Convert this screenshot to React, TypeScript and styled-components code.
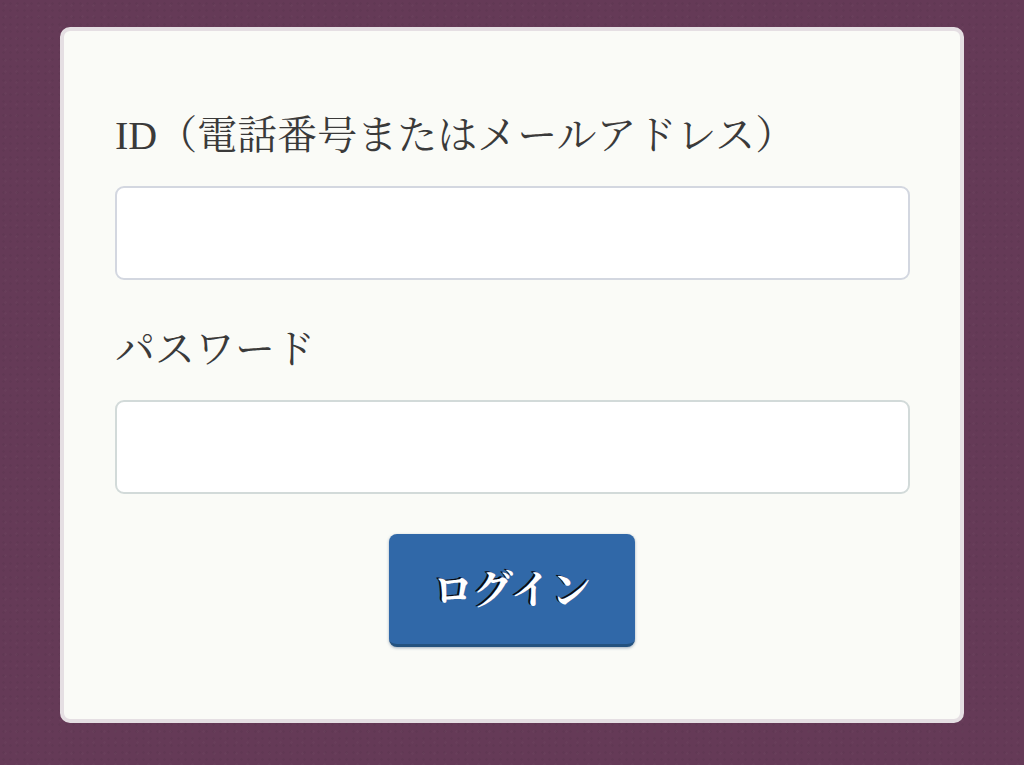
import styled, { createGlobalStyle } from 'styled-components'

const GlobalStyle = createGlobalStyle`
  html, body {
    margin: 0;
    padding: 0;
    height: 100%;
  }
  body {
    background-color: #653a57;
    background-image:
      radial-gradient(rgba(0,0,0,0.035) 1px, transparent 1.5px),
      radial-gradient(rgba(255,255,255,0.02) 1px, transparent 1.5px);
    background-size: 7px 7px, 11px 11px;
    font-family: "Liberation Serif", "Noto Serif CJK JP", "Noto Sans CJK JP", serif;
    overflow: hidden;
  }
`

const Page = styled.div`
  box-sizing: border-box;
  height: 765px;
  padding: 27px 60px 0;
`

const Card = styled.form`
  box-sizing: border-box;
  width: 904px;
  height: 696px;
  padding: 78px 51px 0;
  background: #fafbf7;
  border: 4px solid #e5dfe3;
  border-radius: 10px;
  display: flex;
  flex-direction: column;
`

const Label = styled.label`
  display: block;
  height: 54px;
  line-height: 54px;
  font-size: 40px;
  color: #3a3a3a;
`

const Input = styled.input<{ $edge: string }>`
  box-sizing: border-box;
  display: block;
  width: 795px;
  height: 94px;
  margin: 0;
  padding: 0 16px;
  background: #fff;
  border: 2px solid ${({ $edge }) => $edge};
  border-radius: 9px;
  outline: none;
`

const Field = styled.div<{ $gap: number; $after: number }>`
  display: flex;
  flex-direction: column;
  gap: ${({ $gap }) => $gap}px;
  margin-bottom: ${({ $after }) => $after}px;
`

const Actions = styled.div`
  display: flex;
  justify-content: center;
`

const LoginButton = styled.button`
  box-sizing: border-box;
  width: 246px;
  height: 113px;
  padding: 0 0 6px;
  background: #3068a8;
  border: none;
  border-bottom: 3px solid #24527f;
  border-radius: 8px;
  box-shadow: 0 1px 3px rgba(48, 80, 120, 0.45);
  color: #fff;
  font-family: inherit;
  font-size: 40px;
  font-weight: 700;
  text-shadow: -2px -1px 0 #0a0a14;
`

export default function App() {
  return (
    <Page>
      <GlobalStyle />
      <Card onSubmit={(e) => e.preventDefault()}>
        <Field $gap={23} $after={43}>
          <Label htmlFor="login-id">ID（電話番号またはメールアドレス）</Label>
          <Input id="login-id" type="text" $edge="#d3d7e0" />
        </Field>
        <Field $gap={23} $after={40}>
          <Label htmlFor="login-password">パスワード</Label>
          <Input id="login-password" type="password" $edge="#d2dad9" />
        </Field>
        <Actions>
          <LoginButton type="submit">ログイン</LoginButton>
        </Actions>
      </Card>
    </Page>
  )
}
